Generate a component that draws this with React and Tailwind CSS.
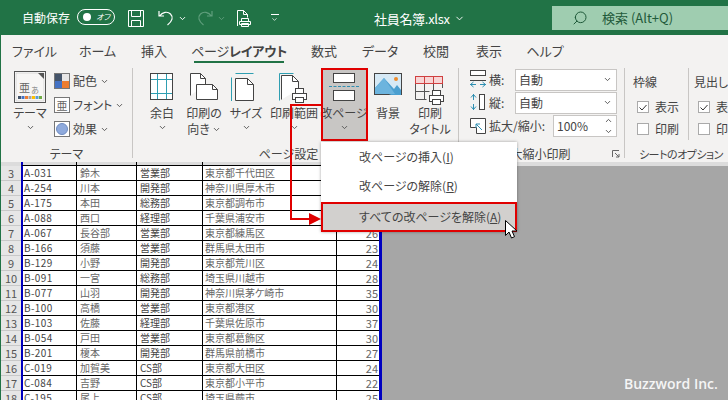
import React from "react";
import { ChevronDown, ChevronUp, Search } from "lucide-react";

const tabs = [
  { name: "ファイル", w: "w-[39px]" },
  { name: "ホーム", w: "w-[33px]" },
  { name: "挿入", w: "w-[26px]" },
  { name: "ページレイアウト", w: "w-[90px]", active: true },
  { name: "数式", w: "w-[26px]" },
  { name: "データ", w: "w-[32px]" },
  { name: "校閲", w: "w-[26px]" },
  { name: "表示", w: "w-[26px]" },
  { name: "ヘルプ", w: "w-[32px]" },
];

const rows = [
  [3, "A-031", "鈴木", "営業部", "東京都千代田区", ""],
  [4, "A-254", "川本", "開発部", "神奈川県厚木市", ""],
  [5, "A-175", "本田", "総務部", "東京都調布市", ""],
  [6, "A-088", "西口", "経理部", "千葉県浦安市", ""],
  [7, "A-067", "長谷部", "営業部", "東京都練馬区", "26"],
  [8, "B-166", "須藤", "営業部", "群馬県太田市", "23"],
  [9, "B-129", "小野", "開発部", "東京都荒川区", "24"],
  [10, "B-091", "一宮", "総務部", "埼玉県川越市", "28"],
  [11, "B-077", "山羽", "開発部", "神奈川県茅ケ崎市", "35"],
  [12, "B-100", "高橋", "営業部", "東京都港区", "30"],
  [13, "B-103", "佐藤", "経理部", "千葉県佐原市", "37"],
  [14, "B-054", "戸田", "営業部", "東京都葛飾区", "30"],
  [15, "B-201", "榎本", "開発部", "群馬県前橋市", "27"],
  [16, "C-019", "加賀美", "CS部", "東京都大田区", "24"],
  [17, "C-084", "吉野", "CS部", "東京都小平市", "22"],
  [18, "C-195", "尾上", "CS部", "埼玉県蕨市", "25"],
];

const Chevron = ({ className = "" }) => (
  <ChevronDown className={`w-[9px] h-[9px] text-[#555] ${className}`} strokeWidth={2.5} />
);

// 印刷アイコンの小さいプリンター
const Printer = ({ x, y }) => (
  <g transform={`translate(${x} ${y})`} fill="#fff" stroke="#444">
    <rect x="3.5" y="0.5" width="8" height="5" />
    <rect x="0.5" y="5.5" width="14" height="6" />
    <rect x="3.5" y="9.5" width="8" height="5" />
  </g>
);

const MarginsIcon = () => (
  <svg width="24" height="28" fill="none">
    <rect x="0.5" y="0.5" width="22" height="26" fill="#fff" stroke="#444" />
    <path d="M7.5 1v25M16.5 1v25M1 6.5h21M1 20.5h21" stroke="#2f9fb2" />
  </svg>
);

const OrientationIcon = () => (
  <svg width="29" height="28" fill="none" stroke="#444">
    <path d="M0.5 22.5v-22h10l5 5v6" fill="#fff" />
    <path d="M10.5 0.5v5h5" />
    <path d="M6.5 11.5h16l5 5v10h-21z" fill="#fff" />
    <path d="M22.5 11.5v5h5" />
  </svg>
);

const SizeIcon = () => (
  <svg width="30" height="28" fill="none">
    <path d="M5 0.5h17M0.5 5v23M5 0v1M22 0v1M0 5h1M0 27.5h1" stroke="#2f9fb2" />
    <path d="M4.5 27.5v-22h12l6 6v16z" fill="#fff" stroke="#444" />
    <path d="M16.5 5.5v6h6" stroke="#444" />
  </svg>
);

const PrintAreaIcon = () => (
  <svg width="30" height="31" fill="none">
    <path d="M0.5 27.5v-27" stroke="#2f9fb2" />
    <path d="M0.5 0.5h14" stroke="#2f9fb2" />
    <path d="M2.5 26.5v-24h11l6 6v8" fill="#fff" stroke="#444" />
    <path d="M13.5 2.5v6h6" stroke="#444" />
    <Printer x={13} y={15} />
  </svg>
);

const BreaksIcon = () => (
  <svg width="30" height="28" fill="none">
    <rect x="4.5" y="0.5" width="21" height="9" fill="#fff" stroke="#444" />
    <path d="M0 13.5h30" stroke="#2f8fb2" strokeDasharray="3 1.5" />
    <rect x="4.5" y="17.5" width="21" height="10" fill="#fff" stroke="#444" />
  </svg>
);

const BackgroundIcon = () => (
  <svg width="28" height="24">
    <rect x="0.5" y="0.5" width="27" height="21" fill="#d6e9f5" stroke="#444" />
    <path d="M1 15l9-10 10 11 3-4 4 5v5h-10z" fill="#4a9fd0" />
    <path d="M1 21v-6l9-10 11 16z" fill="#6cb4de" />
    <circle cx="22" cy="6" r="2" fill="#ed8b2e" />
  </svg>
);

const TitlesIcon = () => (
  <svg width="30" height="30" fill="none">
    <rect x="0.5" y="0.5" width="27" height="7" fill="#f7d5d5" stroke="#d04040" />
    <path d="M9.5 0v8M18.5 0v8" stroke="#d04040" />
    <path d="M0.5 8v15.5h11M0.5 15.5h14M9.5 8v16M18.5 8v6M27.5 8v4" stroke="#555" />
    <Printer x={14} y={14} />
  </svg>
);

const ThemeIcon = () => (
  <svg width="32" height="32">
    <rect x="0.5" y="0.5" width="31" height="31" fill="#fff" stroke="#555" />
    <rect x="2" y="2" width="28" height="28" fill="#f7f6f5" stroke="#bbb" strokeWidth="0.5" />
    <path d="M24 2h6v6z" fill="#555" />
    <text x="5" y="21" fontSize="11" fill="#666">亜</text>
    <text x="17" y="22" fontSize="8" fill="#888">あ</text>
    {["#44546a", "#4472c4", "#ed7d31", "#a5a5a5", "#ffc000", "#5b9bd5", "#70ad47"].map((c, i) => (
      <rect key={c} x={4 + i * 3.5} y="25" width="3" height="3" fill={c} />
    ))}
  </svg>
);

const WidthIcon = () => (
  <svg width="17" height="19" fill="none">
    <rect x="0.5" y="0.5" width="15" height="5" stroke="#444" fill="#fff" />
    <path d="M0 14.5h6M10 14.5h6M0.5 14.5l3-2.5M0.5 14.5l3 2.5M15.5 14.5l-3-2.5M15.5 14.5l-3 2.5" stroke="#2f8fb2" />
    <path d="M0 10.5h16" stroke="#444" />
  </svg>
);

const HeightIcon = () => (
  <svg width="17" height="17" fill="none">
    <path d="M3.5 0v6M3.5 10v6M3.5 0.5l-2.5 3M3.5 0.5l2.5 3M3.5 15.5l-2.5-3M3.5 15.5l2.5-3" stroke="#2f8fb2" />
    <rect x="9.5" y="0.5" width="5" height="15" stroke="#444" fill="#fff" />
  </svg>
);

const ScaleIcon = () => (
  <svg width="17" height="16" fill="none">
    <path d="M0.5 0.5h15v15h-9v-6h-6z" stroke="#444" fill="#fff" />
    <path d="M12 12l-6-6M6 6h4M6 6v4" stroke="#2f8fb2" />
  </svg>
);

const BigButton = ({ w, icon, label, second, chevronOnly, active, iconTop = "pt-[5px]" }) => (
  <div className={`${w} h-[72px] shrink-0 flex flex-col items-center ${active ? "bg-[#c8c6c4]" : ""}`}>
    <div className={`h-[37px] shrink-0 flex items-start ${iconTop}`}>{icon}</div>
    <div className="leading-[16px] whitespace-nowrap">{label}</div>
    {second && (
      <div className="leading-[16px] whitespace-nowrap flex items-center gap-[2px]">
        {second}
        {!chevronOnly && <Chevron />}
      </div>
    )}
    {chevronOnly && <Chevron className="mt-[2px]" />}
  </div>
);

const SmallThemeButton = ({ children, label }) => (
  <div className="h-[24px] flex items-center">
    <div className="w-[16px] h-[16px] border border-[#777] bg-white flex items-center justify-center shrink-0 overflow-hidden">
      {children}
    </div>
    <span className="ml-[3px]">{label}</span>
    <Chevron className="ml-[3px]" />
  </div>
);

const ScaleRow = ({ icon, label, value, inputWidth = "w-[102px]", spin }) => (
  <div className="h-[23px] flex items-center">
    <div className="w-[19px] shrink-0 flex items-center">{icon}</div>
    <span className="whitespace-nowrap flex-1">{label}</span>
    <div className={`${inputWidth} h-[22px] border border-[#c8c6c4] bg-white flex items-center justify-between pl-[3px] pr-[3px] shrink-0`}>
      <span className="text-[12px]">{value}</span>
      {spin ? (
        <span className="flex flex-col">
          <ChevronUp className="w-[9px] h-[9px] text-[#555]" strokeWidth={2.5} />
          <ChevronDown className="w-[9px] h-[9px] text-[#555] mt-[2px]" strokeWidth={2.5} />
        </span>
      ) : (
        <Chevron className="mr-[1px]" />
      )}
    </div>
  </div>
);

const CheckRow = ({ checked, label }) => (
  <div className="h-[22px] flex items-center gap-[6px] whitespace-nowrap">
    <span className="w-[12px] h-[12px] border border-[#aaa] bg-white flex items-center justify-center shrink-0">
      {checked && (
        <svg width="8" height="7" fill="none">
          <path d="M0.5 3.5l2.5 2.5 4.5-5" stroke="#333" />
        </svg>
      )}
    </span>
    {label}
  </div>
);

const GroupLabel = ({ children, className = "" }) => (
  <div className={`h-[16px] shrink-0 leading-[16px] text-center whitespace-nowrap ${className}`}>{children}</div>
);

function TitleBar() {
  return (
    <div className="h-[35px] bg-[#217346] flex text-white text-[12px] relative">
      <span className="ml-[21px] mt-[9px] leading-[17px]">自動保存</span>
      <div className="ml-[7px] mt-[9px] w-[38px] h-[16px] border border-white rounded-full flex items-center pl-[5px] gap-[5px]">
        <span className="w-[8px] h-[8px] bg-white rounded-full" />
        <span className="text-[8px] italic leading-none">オフ</span>
      </div>
      <svg className="ml-[13px] mt-[10px]" width="17" height="17" fill="none" stroke="#fff">
        <path d="M0.5 0.5h15v16h-15zM3.5 0.5v6h9v-6M3.5 16.5v-6h9v6" />
      </svg>
      <svg className="ml-[13px] mt-[9px]" width="17" height="17" fill="none" stroke="#fff" strokeWidth="1.2">
        <path d="M1 2v5h5M1.5 7c3-4 8-5 11-2s2 7-3 11" />
      </svg>
      <ChevronDown className="ml-[3px] mt-[14px] w-[9px] h-[9px]" strokeWidth={2.5} />
      <svg className="ml-[10px] mt-[9px]" width="17" height="17" fill="none" stroke="#5f9e7c" strokeWidth="1.2">
        <path d="M15 2v5h-5M14.5 7c-3-4-8-5-11-2s-2 7 3 11" />
      </svg>
      <ChevronDown className="ml-[3px] mt-[14px] w-[9px] h-[9px] text-[#5f9e7c]" strokeWidth={2.5} />
      <svg className="ml-[10px] mt-[10px]" width="16" height="17" fill="none" stroke="#fff">
        <path d="M1.5 16v-15.500h6l4 4v3M7.500 0.500v4h4" />
        <path d="M5.500 8.500h7v3h-7zM3.500 11.500h11v3h-11zM5.500 13.500h7v3h-7z" />
      </svg>
      <div className="ml-[18px] mt-[14px] flex flex-col items-center gap-[1px]">
        <span className="w-[8px] h-[1px] bg-white" />
        <ChevronDown className="w-[9px] h-[7px]" strokeWidth={2.5} />
      </div>
      <span className="ml-[95px] mt-[10px] text-[13px] tracking-[-0.3px] leading-[18px] whitespace-nowrap">社員名簿.xlsx</span>
      <ChevronDown className="ml-[4px] mt-[13px] w-[11px] h-[11px]" strokeWidth={2} />
      <div className="ml-auto mt-[6px] w-[176px] h-[24px] bg-[#9fcdb0] flex items-center text-[#1f5a3a] text-[13px]">
        <Search className="ml-[20px] w-[16px] h-[16px] -scale-x-100" strokeWidth={1.5} />
        <span className="ml-[14px] whitespace-nowrap">検索 (Alt+Q)</span>
      </div>
    </div>
  );
}

function TabRow() {
  return (
    <div className="h-[33px] bg-[#f3f2f1] flex gap-[27px] pl-[14px] text-[13px] text-[#444]">
      {tabs.map((t) => (
        <div key={t.name} className={`${t.w} h-[28px] flex justify-center pt-[7px] leading-[18px] whitespace-nowrap ${t.active ? "border-b-[2px] border-[#217346]" : ""}`}>
          {t.active ? (
            <span className="tracking-[-0.2px]">
              ページ<span className="font-semibold">レイアウト</span>
            </span>
          ) : (
            t.name
          )}
        </div>
      ))}
    </div>
  );
}

function Ribbon() {
  return (
    <div className="h-[94px] bg-[#f3f2f1] flex text-[12px] text-[#444] overflow-hidden">
      {/* テーマ */}
      <div className="w-[132px] shrink-0 border-r border-[#c8c6c4] mb-[4px] flex flex-col">
        <div className="h-[78px] shrink-0 flex">
          <div className="ml-[6px] w-[46px]">
            <BigButton w="w-[46px]" icon={<ThemeIcon />} label="テーマ" chevronOnly iconTop="pt-[3px]" />
          </div>
          <div className="ml-[1px] pt-[1px]">
            <SmallThemeButton label="配色">
              <div className="grid grid-cols-2 w-full h-full">
                <span className="bg-[#44546a]" />
                <span className="bg-[#e7e6e6]" />
                <span className="bg-[#4472c4]" />
                <span className="bg-[#ed7d31]" />
              </div>
            </SmallThemeButton>
            <SmallThemeButton label="フォント">
              <span className="text-[11px] leading-none text-[#666]">亜</span>
            </SmallThemeButton>
            <SmallThemeButton label="効果">
              <span className="w-[12px] h-[12px] rounded-full bg-[#8faadc] border border-[#6f8cc0]" />
            </SmallThemeButton>
          </div>
        </div>
        <GroupLabel>テーマ</GroupLabel>
      </div>

      {/* ページ設定 */}
      <div className="w-[326px] shrink-0 border-r border-[#c8c6c4] mb-[4px] flex flex-col">
        <div className="h-[78px] shrink-0 flex pl-[8px]">
          <BigButton w="w-[42px]" icon={<MarginsIcon />} label="余白" chevronOnly />
          <BigButton w="w-[42px]" icon={<OrientationIcon />} label="印刷の" second="向き" />
          <BigButton w="w-[42px]" icon={<SizeIcon />} label="サイズ" chevronOnly />
          <BigButton w="w-[54px]" icon={<PrintAreaIcon />} label="印刷範囲" chevronOnly />
          <BigButton w="w-[46px]" icon={<BreaksIcon />} label="改ページ" chevronOnly active />
          <BigButton w="w-[42px]" icon={<BackgroundIcon />} label="背景" />
          <div className="w-[42px] h-[72px] shrink-0 flex flex-col items-center">
            <div className="h-[37px] shrink-0 pt-[8px]">
              <TitlesIcon />
            </div>
            <div className="leading-[16px] whitespace-nowrap">印刷</div>
            <div className="leading-[16px] whitespace-nowrap">タイトル</div>
          </div>
        </div>
        <GroupLabel className="pr-[14px]">ページ設定</GroupLabel>
      </div>

      {/* 拡大縮小印刷 */}
      <div className="w-[166px] shrink-0 border-r border-[#c8c6c4] mb-[4px] flex flex-col">
        <div className="h-[78px] shrink-0 pl-[11px] pr-[7px]">
          <ScaleRow icon={<WidthIcon />} label="横:" value="自動" />
          <ScaleRow icon={<HeightIcon />} label="縦:" value="自動" />
          <ScaleRow icon={<ScaleIcon />} label="拡大/縮小:" value="100%" inputWidth="w-[64px]" spin />
        </div>
        <div className="relative">
          <GroupLabel className="pr-[14px]">拡大縮小印刷</GroupLabel>
          <svg className="absolute right-[4px] top-[4px]" width="8" height="8" fill="none" stroke="#666">
            <path d="M0.500 7V0.500H7M3 3l4 4M7 4v3H4" />
          </svg>
        </div>
      </div>

      {/* シートのオプション */}
      <div className="w-[112px] shrink-0 mb-[4px] flex flex-col">
        <div className="h-[78px] shrink-0 flex">
          <div className="w-[64px] shrink-0 border-r border-[#c8c6c4] mb-[6px] pl-[8px] pt-[5px]">
            <div className="leading-[17px] mb-[6px]">枠線</div>
            <div className="pl-[4px]">
              <CheckRow checked label="表示" />
              <CheckRow label="印刷" />
            </div>
          </div>
          <div className="pl-[5px] pt-[5px]">
            <div className="leading-[17px] mb-[6px] whitespace-nowrap">見出し</div>
            <div className="pl-[4px]">
              <CheckRow checked label="表示" />
              <CheckRow label="印刷" />
            </div>
          </div>
        </div>
        <GroupLabel className="text-[11px] tracking-[-0.5px]">シートのオプション</GroupLabel>
      </div>
    </div>
  );
}

function Sheet() {
  return (
    <div className="flex-1 bg-[#a6a6a6] overflow-hidden text-[10px] text-[#666] leading-[14px]">
      <div className="h-[4px] flex bg-[#dcdcdc]">
        <div className="w-[20px] shrink-0" />
        <div className="w-[358px] shrink-0 flex border-l-2 border-[#0000c0]">
          <div className="w-[54px] border-r border-black" />
          <div className="w-[60px] border-r border-black" />
          <div className="w-[66px] border-r border-black" />
          <div className="w-[134px] border-r border-black" />
        </div>
      </div>
      {rows.map((r, i) => (
        <div key={r[0]} className="h-[15px] flex">
          <div className="w-[20px] shrink-0 bg-[#e6e6e6] border-b border-[#c8c8c8] text-center text-[11px] text-[#555]">{r[0]}</div>
          <div className={`w-[361px] shrink-0 flex bg-white border-l-2 border-r-[3px] border-[#0000c0] ${i === 0 ? "border-t border-t-black -mt-[1px] h-[16px]" : ""}`}>
            <div className="w-[54px] border-r border-b border-black pl-[1px] tracking-[0.4px] text-[#444]">{r[1]}</div>
            <div className="w-[60px] border-r border-b border-black pl-[3px]">{r[2]}</div>
            <div className="w-[66px] border-r border-b border-black pl-[3px] text-[#444]">{r[3]}</div>
            <div className="w-[134px] border-r border-b border-black pl-[2px]">{r[4]}</div>
            <div className="flex-1 border-b border-black text-right pr-[1px] text-[11px]">{r[5]}</div>
          </div>
        </div>
      ))}
    </div>
  );
}

export default function App() {
  return (
    <div className="w-[728px] h-[400px] relative overflow-hidden flex flex-col border-l border-[#217346] font-['Noto_Sans_CJK_JP','Noto_Sans',sans-serif] [font-feature-settings:'palt']">
      <TitleBar />
      <TabRow />
      <Ribbon />
      <Sheet />

      {/* 改ページボタンの赤枠と矢印 */}
      <div className="absolute left-[320px] top-[68px] w-[47px] h-[73px] border-2 border-[#e00000]" />
      <div className="absolute left-[290px] top-[104px] w-[31px] h-[2px] bg-[#e00000]" />
      <div className="absolute left-[289px] top-[104px] w-[2px] h-[116px] bg-[#e00000]" />
      <div className="absolute left-[289px] top-[218px] w-[20px] h-[2px] bg-[#e00000]" />
      <svg className="absolute left-[308px] top-[213px]" width="12" height="12">
        <path d="M0 0l12 6-12 6z" fill="#e00000" />
      </svg>

      {/* ドロップダウンメニュー */}
      <div className="absolute left-[320px] top-[142px] w-[196px] h-[90px] bg-white shadow-[0_0_3px_rgba(0,0,0,0.35)] text-[12px] text-[#444]">
        <div className="h-[29px] pl-[38px] flex items-center">
          <span>改ページの挿入(<span className="underline">I</span>)</span>
        </div>
        <div className="h-[29px] pl-[38px] flex items-center">
          <span>改ページの解除(<span className="underline">R</span>)</span>
        </div>
        <div className="mt-[2px] h-[30px] pl-[36px] bg-[#d2d0ce] border-2 border-[#e00000] flex items-center">
          <span>すべての改ページを解除(<span className="underline">A</span>)</span>
        </div>
      </div>

      {/* マウスカーソル */}
      <svg className="absolute left-[504px] top-[220px]" width="13" height="21">
        <path d="M0.500 0.500v15l3.500-3.500 2.500 6 3-1.300-2.500-5.700h5z" fill="#fff" stroke="#000" />
      </svg>

      <span className="absolute left-[623px] top-[373px] text-[14px] leading-[22px] font-semibold text-[#f5f5f5] font-['Open_Sans',sans-serif]">
        Buzzword Inc.
      </span>
    </div>
  );
}
